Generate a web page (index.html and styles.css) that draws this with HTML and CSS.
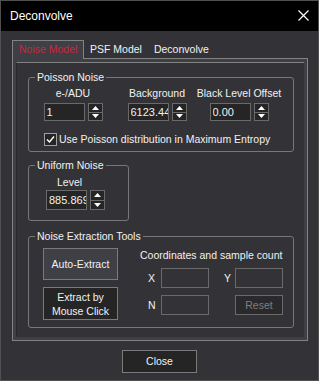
FILE: index.html
```html
<!DOCTYPE html>
<html>
<head>
<meta charset="utf-8">
<link rel="stylesheet" href="styles.css">
</head>
<body>
<div class="window">
  <div class="titlebar">
    <span class="title">Deconvolve</span>
    <svg class="close-x" width="11" height="11" viewBox="0 0 11 11"><path d="M0.5 0.5 L10.5 10.5 M10.5 0.5 L0.5 10.5" stroke="#fff" stroke-width="1.2" fill="none"/></svg>
  </div>
  <div class="content">
    <div class="tabs">
      <div class="tab active">Noise Model</div>
      <div class="tab">PSF Model</div>
      <div class="tab">Deconvolve</div>
    </div>
    <div class="tabpage">
      <div class="page-inner">
        <fieldset class="group poisson">
          <legend>Poisson Noise</legend>
          <div class="cols">
            <div class="col c1">
              <div class="lbl">e-/ADU</div>
              <div class="spin">
                <input class="field" value="1">
                <div class="spinbtns"><span class="sb up"><svg width="7" height="4" viewBox="0 0 7 4"><path d="M3.5 0 L7 4 L0 4 Z" fill="#fff"/></svg></span><span class="sb dn"><svg width="7" height="4" viewBox="0 0 7 4"><path d="M0 0 L7 0 L3.5 4 Z" fill="#fff"/></svg></span></div>
              </div>
            </div>
            <div class="col c2">
              <div class="lbl">Background</div>
              <div class="spin">
                <input class="field" value="6123.4467">
                <div class="spinbtns"><span class="sb up"><svg width="7" height="4" viewBox="0 0 7 4"><path d="M3.5 0 L7 4 L0 4 Z" fill="#fff"/></svg></span><span class="sb dn"><svg width="7" height="4" viewBox="0 0 7 4"><path d="M0 0 L7 0 L3.5 4 Z" fill="#fff"/></svg></span></div>
              </div>
            </div>
            <div class="col c3">
              <div class="lbl">Black Level Offset</div>
              <div class="spin">
                <input class="field" value="0.00">
                <div class="spinbtns"><span class="sb up"><svg width="7" height="4" viewBox="0 0 7 4"><path d="M3.5 0 L7 4 L0 4 Z" fill="#fff"/></svg></span><span class="sb dn"><svg width="7" height="4" viewBox="0 0 7 4"><path d="M0 0 L7 0 L3.5 4 Z" fill="#fff"/></svg></span></div>
              </div>
            </div>
          </div>
          <div class="check-row">
            <span class="checkbox"><svg width="11" height="11" viewBox="0 0 11 11"><path d="M2 5.5 L4.5 8 L9 2.5" stroke="#fff" stroke-width="1.5" fill="none"/></svg></span>
            <span>Use Poisson distribution in Maximum Entropy</span>
          </div>
        </fieldset>

        <fieldset class="group uniform">
          <legend>Uniform Noise</legend>
          <div class="lbl level">Level</div>
          <div class="spin tall">
            <input class="field" value="885.8693">
            <div class="spinbtns"><span class="sb up"><svg width="7" height="4" viewBox="0 0 7 4"><path d="M3.5 0 L7 4 L0 4 Z" fill="#fff"/></svg></span><span class="sb dn"><svg width="7" height="4" viewBox="0 0 7 4"><path d="M0 0 L7 0 L3.5 4 Z" fill="#fff"/></svg></span></div>
          </div>
        </fieldset>

        <fieldset class="group extract">
          <legend>Noise Extraction Tools</legend>
          <div class="extract-body">
            <div class="btncol">
              <div class="btn light">Auto-Extract</div>
              <div class="btn dark">Extract by<br>Mouse Click</div>
            </div>
            <div class="coords">
              <div class="coords-title">Coordinates and sample count</div>
              <div class="coord-grid">
                <span class="cl">X</span><span class="box"></span><span class="cl r">Y</span><span class="box"></span>
                <span class="cl">N</span><span class="box"></span><span></span><span class="btn reset">Reset</span>
              </div>
            </div>
          </div>
        </fieldset>
      </div>
    </div>
    <div class="footer">
      <div class="btn close">Close</div>
    </div>
  </div>
</div>
</body>
</html>
```
FILE: styles.css
```css
* { box-sizing: border-box; }
html, body { margin: 0; padding: 0; }
body {
  width: 319px;
  height: 381px;
  background: #333337;
  font-family: "Liberation Sans", Arial, sans-serif;
  font-size: 10.5px;
  line-height: 13px;
  color: #f1f1f1;
  overflow: hidden;
}
.window {
  width: 319px;
  height: 381px;
  border: 1px solid #505050;
  background: #333337;
}
.titlebar {
  height: 30px;
  background: #000;
  display: flex;
  align-items: center;
  justify-content: space-between;
  padding: 0 9px 0 9px;
}
.title { font-size: 12px; color: #fff; }
.close-x { display: block; margin-top: -1px; }

.content { padding: 9px 10px 0 11px; }

.tabs { display: flex; height: 18px; position: relative; z-index: 1; }
.tab {
  padding: 3px 6px 0 6px;
  height: 18px;
  color: #f1f1f1;
  white-space: nowrap;
}
.tab.active {
  color: #c8283c;
  background: #3f3f46;
  border: 1px solid #828282;
  border-bottom: none;
  padding: 2px 6px 0 6px;
  width: 72px;
  height: 19px;
}

.tabpage {
  width: 296px;
  height: 283px;
  border: 1px solid #828282;
  background: #3f3f46;
  padding: 3px;
}
.page-inner {
  height: 100%;
  background: #333337;
  border-top: 1px solid #828282;
  border-left: 1px solid #2a2a2e;
  padding: 8px 0 0 11px;
}

.group {
  margin: 0;
  padding: 0;
  border: 1px solid #777;
  border-radius: 3px;
  min-width: 0;
}
.group legend {
  margin-left: 6px;
  padding: 0 2px;
  line-height: 13px;
  height: 13px;
}
.poisson { width: 266px; height: 81px; }
.uniform { width: 101px; height: 62px; margin-top: 7px !important; }
.extract { width: 266px; height: 98px; margin-top: 9px !important; }

.cols { display: flex; padding-top: 3px; }
.col { display: flex; flex-direction: column; align-items: center; }
.c1 { width: 88px; }
.c2 { width: 80px; }
.c3 { width: 84px; }
.lbl { white-space: nowrap; height: 13px; }
.col .spin { margin-top: 3px; }

.spin { display: flex; height: 18px; }
.spin.tall { height: 20px; }
.field {
  width: 41px;
  height: 100%;
  background: #252526;
  border: 1px solid #6a6a6a;
  color: #f1f1f1;
  font-family: "Liberation Sans", Arial, sans-serif;
  font-size: 11px;
  padding: 0 0 0 2px;
  margin: 0;
  outline: none;
}
.spinbtns {
  margin-left: 3px;
  width: 15px;
  display: flex;
  flex-direction: column;
}
.sb {
  flex: 1;
  border: 1px solid #6a6a6a;
  background: #252526;
  display: flex;
  align-items: center;
  justify-content: center;
}
.sb svg { display: block; }
.sb.dn { border-top: none; }

.check-row {
  display: flex;
  align-items: center;
  margin: 12px 0 0 15px;
  gap: 2px;
  white-space: nowrap;
}
.checkbox {
  width: 13px;
  height: 13px;
  border: 1px solid #a0a0a0;
  background: #252526;
  display: flex;
  align-items: center;
  justify-content: center;
}

.level { margin: 4px 0 1px 28px; }
.uniform .spin { margin-left: 17px; }

.extract-body { display: flex; padding: 5px 0 0 14px; }
.btncol { display: flex; flex-direction: column; gap: 7px; }
.btn {
  border: 1px solid #7a7a7a;
  display: flex;
  align-items: center;
  justify-content: center;
  text-align: center;
  color: #f1f1f1;
}
.btn.light { width: 75px; height: 32px; background: #3f3f46; }
.btn.dark { width: 75px; height: 33px; background: #252526; line-height: 14px; }

.coords { margin-left: 29px; }
.coords-title { margin-left: -7px; white-space: nowrap; height: 13px; margin-top: 1px; }
.coord-grid {
  display: grid;
  grid-template-columns: 14px 48px 26px 48px;
  grid-template-rows: 20px 20px;
  row-gap: 7px;
  margin-top: 6px;
  align-items: center;
}
.cl { padding-left: 1px; }
.cl.r { text-align: right; padding-right: 4px; }
.box { height: 20px; border: 1px solid #6a6a6a; background: #333337; }
.btn.reset { height: 20px; background: #2a2a2c; color: #7f7f7f; border-color: #6a6a6a; }

.footer { display: flex; justify-content: center; padding-top: 9px; padding-right: 1px; }
.btn.close { width: 75px; height: 23px; background: #252526; }
```
